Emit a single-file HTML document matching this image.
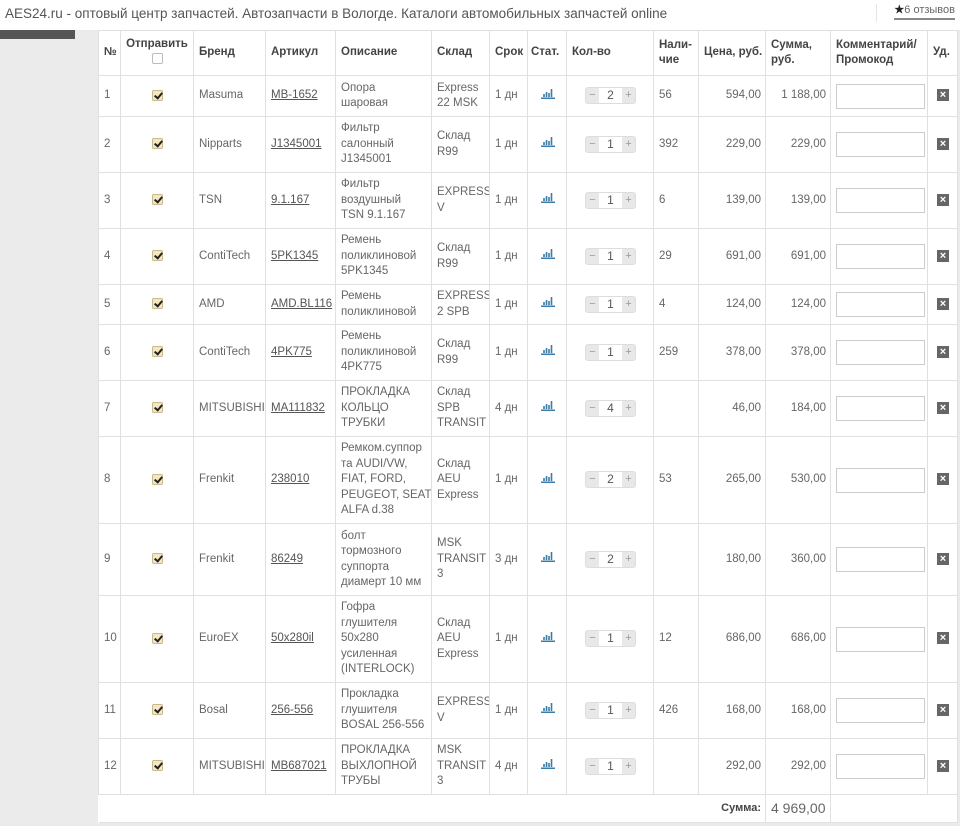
<!DOCTYPE html>
<html><head><meta charset="utf-8"><style>
*{box-sizing:border-box;margin:0;padding:0}
body{width:960px;height:826px;background:#fff;font-family:"Liberation Sans",sans-serif;color:#666;font-size:11.5px;position:relative;overflow:hidden}
.top{position:absolute;left:0;top:0;width:960px;height:30px;background:#fff}
.title{position:absolute;left:5px;top:6px;font-size:13.5px;color:#555}
.rev{position:absolute;right:5px;top:3px;font-size:11px;color:#666;border-bottom:2px solid #888;padding-bottom:2px}
.rev b{color:#222}
.sep{position:absolute;left:876px;top:4px;width:1px;height:18px;background:#e5e5e5}
.bg{position:absolute;left:0;top:30px;width:960px;height:796px;background:#ebebeb}
.dark{position:absolute;left:0;top:30px;width:75px;height:9px;background:#555}
table{position:absolute;left:98px;top:30px;width:859px;border-collapse:collapse;table-layout:fixed;background:#fff}
td,th{border:1px solid #e0e0e0;padding:0 4px 0 5px;vertical-align:middle;line-height:15.5px;text-align:left;overflow:hidden;white-space:nowrap}
th{font-weight:bold;color:#444;font-size:11.5px}
.c{text-align:center}.r{text-align:right}
u{color:#555}
.cb{display:inline-block;width:11px;height:11px;background:#f3e7c4;border:1px solid #c9b98a;border-radius:2px;position:relative;vertical-align:middle}
.cb:after{content:"";position:absolute;left:3px;top:0px;width:3px;height:6px;border:solid #222;border-width:0 2px 2px 0;transform:rotate(40deg)}
.cbe{display:inline-block;width:11px;height:11px;border:1px solid #bbb;border-radius:2px;background:#fff}
.q{display:inline-flex;height:17px;border:1px solid #ddd;border-radius:3px;background:#e8e8e8;margin-left:13px;vertical-align:middle}
.q span{width:13px;text-align:center;color:#999;line-height:15px;font-size:11px}
.q i{font-style:normal;width:23px;background:#fff;text-align:center;line-height:15px;font-size:12px;color:#555}
.in{display:block;width:89px;height:25px;border:1px solid #ccc;background:#fff}
.x{display:inline-block;width:12px;height:12px;background:#666;color:#fff;font-size:11px;line-height:12px;text-align:center;font-weight:bold}
</style></head><body>
<div class="top"><div class="title">AES24.ru - оптовый центр запчастей. Автозапчасти в Вологде. Каталоги автомобильных запчастей online</div><div class="sep"></div><div class="rev"><b>★</b>6 отзывов</div></div>
<div class="bg"></div><div class="dark"></div>
<table>
<colgroup><col style="width:22px"><col style="width:73px"><col style="width:72px"><col style="width:70px"><col style="width:96px"><col style="width:58px"><col style="width:38px"><col style="width:39px"><col style="width:87px"><col style="width:45px"><col style="width:67px"><col style="width:65px"><col style="width:97px"><col style="width:30px"></colgroup>
<tr style="height:45px"><th>№</th><th class="c" style="padding:0 2px">Отправить<br><span class="cbe"></span></th><th>Бренд</th><th>Артикул</th><th>Описание</th><th>Склад</th><th>Срок</th><th style="padding:0 3px">Стат.</th><th>Кол-во</th><th>Нали-<br>чие</th><th>Цена, руб.</th><th>Сумма,<br>руб.</th><th>Комментарий/<br>Промокод</th><th>Уд.</th></tr>
<tr style="height:41px"><td>1</td><td class="c"><span class="cb"></span></td><td>Masuma</td><td><u>MB-1652</u></td><td>Опора<br>шаровая</td><td>Express<br>22 MSK</td><td>1 дн</td><td class="c"><svg width="14" height="11"><path d="M0 10.3h14M3 9V6M5.5 9V4M8 9V5M10.5 9V1" stroke="#3a7ca5" stroke-width="1.6"/></svg></td><td><span class="q"><span>−</span><i>2</i><span>+</span></span></td><td>56</td><td class="r">594,00</td><td class="r">1 188,00</td><td><span class="in"></span></td><td class="c"><span class="x">×</span></td></tr>
<tr style="height:56px"><td>2</td><td class="c"><span class="cb"></span></td><td>Nipparts</td><td><u>J1345001</u></td><td>Фильтр<br>салонный<br>J1345001</td><td>Склад<br>R99</td><td>1 дн</td><td class="c"><svg width="14" height="11"><path d="M0 10.3h14M3 9V6M5.5 9V4M8 9V5M10.5 9V1" stroke="#3a7ca5" stroke-width="1.6"/></svg></td><td><span class="q"><span>−</span><i>1</i><span>+</span></span></td><td>392</td><td class="r">229,00</td><td class="r">229,00</td><td><span class="in"></span></td><td class="c"><span class="x">×</span></td></tr>
<tr style="height:56px"><td>3</td><td class="c"><span class="cb"></span></td><td>TSN</td><td><u>9.1.167</u></td><td>Фильтр<br>воздушный<br>TSN 9.1.167</td><td>EXPRESS<br>V</td><td>1 дн</td><td class="c"><svg width="14" height="11"><path d="M0 10.3h14M3 9V6M5.5 9V4M8 9V5M10.5 9V1" stroke="#3a7ca5" stroke-width="1.6"/></svg></td><td><span class="q"><span>−</span><i>1</i><span>+</span></span></td><td>6</td><td class="r">139,00</td><td class="r">139,00</td><td><span class="in"></span></td><td class="c"><span class="x">×</span></td></tr>
<tr style="height:56px"><td>4</td><td class="c"><span class="cb"></span></td><td>ContiTech</td><td><u>5PK1345</u></td><td>Ремень<br>поликлиновой<br>5PK1345</td><td>Склад<br>R99</td><td>1 дн</td><td class="c"><svg width="14" height="11"><path d="M0 10.3h14M3 9V6M5.5 9V4M8 9V5M10.5 9V1" stroke="#3a7ca5" stroke-width="1.6"/></svg></td><td><span class="q"><span>−</span><i>1</i><span>+</span></span></td><td>29</td><td class="r">691,00</td><td class="r">691,00</td><td><span class="in"></span></td><td class="c"><span class="x">×</span></td></tr>
<tr style="height:40px"><td>5</td><td class="c"><span class="cb"></span></td><td>AMD</td><td><u>AMD.BL116</u></td><td>Ремень<br>поликлиновой</td><td>EXPRESS-<br>2 SPB</td><td>1 дн</td><td class="c"><svg width="14" height="11"><path d="M0 10.3h14M3 9V6M5.5 9V4M8 9V5M10.5 9V1" stroke="#3a7ca5" stroke-width="1.6"/></svg></td><td><span class="q"><span>−</span><i>1</i><span>+</span></span></td><td>4</td><td class="r">124,00</td><td class="r">124,00</td><td><span class="in"></span></td><td class="c"><span class="x">×</span></td></tr>
<tr style="height:56px"><td>6</td><td class="c"><span class="cb"></span></td><td>ContiTech</td><td><u>4PK775</u></td><td>Ремень<br>поликлиновой<br>4PK775</td><td>Склад<br>R99</td><td>1 дн</td><td class="c"><svg width="14" height="11"><path d="M0 10.3h14M3 9V6M5.5 9V4M8 9V5M10.5 9V1" stroke="#3a7ca5" stroke-width="1.6"/></svg></td><td><span class="q"><span>−</span><i>1</i><span>+</span></span></td><td>259</td><td class="r">378,00</td><td class="r">378,00</td><td><span class="in"></span></td><td class="c"><span class="x">×</span></td></tr>
<tr style="height:56px"><td>7</td><td class="c"><span class="cb"></span></td><td>MITSUBISHI</td><td><u>MA111832</u></td><td>ПРОКЛАДКА<br>КОЛЬЦО<br>ТРУБКИ</td><td>Склад<br>SPB<br>TRANSIT</td><td>4 дн</td><td class="c"><svg width="14" height="11"><path d="M0 10.3h14M3 9V6M5.5 9V4M8 9V5M10.5 9V1" stroke="#3a7ca5" stroke-width="1.6"/></svg></td><td><span class="q"><span>−</span><i>4</i><span>+</span></span></td><td></td><td class="r">46,00</td><td class="r">184,00</td><td><span class="in"></span></td><td class="c"><span class="x">×</span></td></tr>
<tr style="height:87px"><td>8</td><td class="c"><span class="cb"></span></td><td>Frenkit</td><td><u>238010</u></td><td>Ремком.суппор<br>та AUDI/VW,<br>FIAT, FORD,<br>PEUGEOT, SEAT,<br>ALFA d.38</td><td>Склад<br>AEU<br>Express</td><td>1 дн</td><td class="c"><svg width="14" height="11"><path d="M0 10.3h14M3 9V6M5.5 9V4M8 9V5M10.5 9V1" stroke="#3a7ca5" stroke-width="1.6"/></svg></td><td><span class="q"><span>−</span><i>2</i><span>+</span></span></td><td>53</td><td class="r">265,00</td><td class="r">530,00</td><td><span class="in"></span></td><td class="c"><span class="x">×</span></td></tr>
<tr style="height:72px"><td>9</td><td class="c"><span class="cb"></span></td><td>Frenkit</td><td><u>86249</u></td><td>болт<br>тормозного<br>суппорта<br>диамерт 10 мм</td><td>MSK<br>TRANSIT<br>3</td><td>3 дн</td><td class="c"><svg width="14" height="11"><path d="M0 10.3h14M3 9V6M5.5 9V4M8 9V5M10.5 9V1" stroke="#3a7ca5" stroke-width="1.6"/></svg></td><td><span class="q"><span>−</span><i>2</i><span>+</span></span></td><td></td><td class="r">180,00</td><td class="r">360,00</td><td><span class="in"></span></td><td class="c"><span class="x">×</span></td></tr>
<tr style="height:87px"><td>10</td><td class="c"><span class="cb"></span></td><td>EuroEX</td><td><u>50x280il</u></td><td>Гофра<br>глушителя<br>50x280<br>усиленная<br>(INTERLOCK)</td><td>Склад<br>AEU<br>Express</td><td>1 дн</td><td class="c"><svg width="14" height="11"><path d="M0 10.3h14M3 9V6M5.5 9V4M8 9V5M10.5 9V1" stroke="#3a7ca5" stroke-width="1.6"/></svg></td><td><span class="q"><span>−</span><i>1</i><span>+</span></span></td><td>12</td><td class="r">686,00</td><td class="r">686,00</td><td><span class="in"></span></td><td class="c"><span class="x">×</span></td></tr>
<tr style="height:56px"><td>11</td><td class="c"><span class="cb"></span></td><td>Bosal</td><td><u>256-556</u></td><td>Прокладка<br>глушителя<br>BOSAL 256-556</td><td>EXPRESS<br>V</td><td>1 дн</td><td class="c"><svg width="14" height="11"><path d="M0 10.3h14M3 9V6M5.5 9V4M8 9V5M10.5 9V1" stroke="#3a7ca5" stroke-width="1.6"/></svg></td><td><span class="q"><span>−</span><i>1</i><span>+</span></span></td><td>426</td><td class="r">168,00</td><td class="r">168,00</td><td><span class="in"></span></td><td class="c"><span class="x">×</span></td></tr>
<tr style="height:56px"><td>12</td><td class="c"><span class="cb"></span></td><td>MITSUBISHI</td><td><u>MB687021</u></td><td>ПРОКЛАДКА<br>ВЫХЛОПНОЙ<br>ТРУБЫ</td><td>MSK<br>TRANSIT<br>3</td><td>4 дн</td><td class="c"><svg width="14" height="11"><path d="M0 10.3h14M3 9V6M5.5 9V4M8 9V5M10.5 9V1" stroke="#3a7ca5" stroke-width="1.6"/></svg></td><td><span class="q"><span>−</span><i>1</i><span>+</span></span></td><td></td><td class="r">292,00</td><td class="r">292,00</td><td><span class="in"></span></td><td class="c"><span class="x">×</span></td></tr>
<tr style="height:28px"><td colspan="11" class="r" style="border-right:1px solid #e0e0e0;border-left:none;font-weight:bold;color:#444;font-size:11px">Сумма:</td><td style="font-size:14px;color:#666">4 969,00</td><td colspan="2"></td></tr>
</table>
</body></html>
